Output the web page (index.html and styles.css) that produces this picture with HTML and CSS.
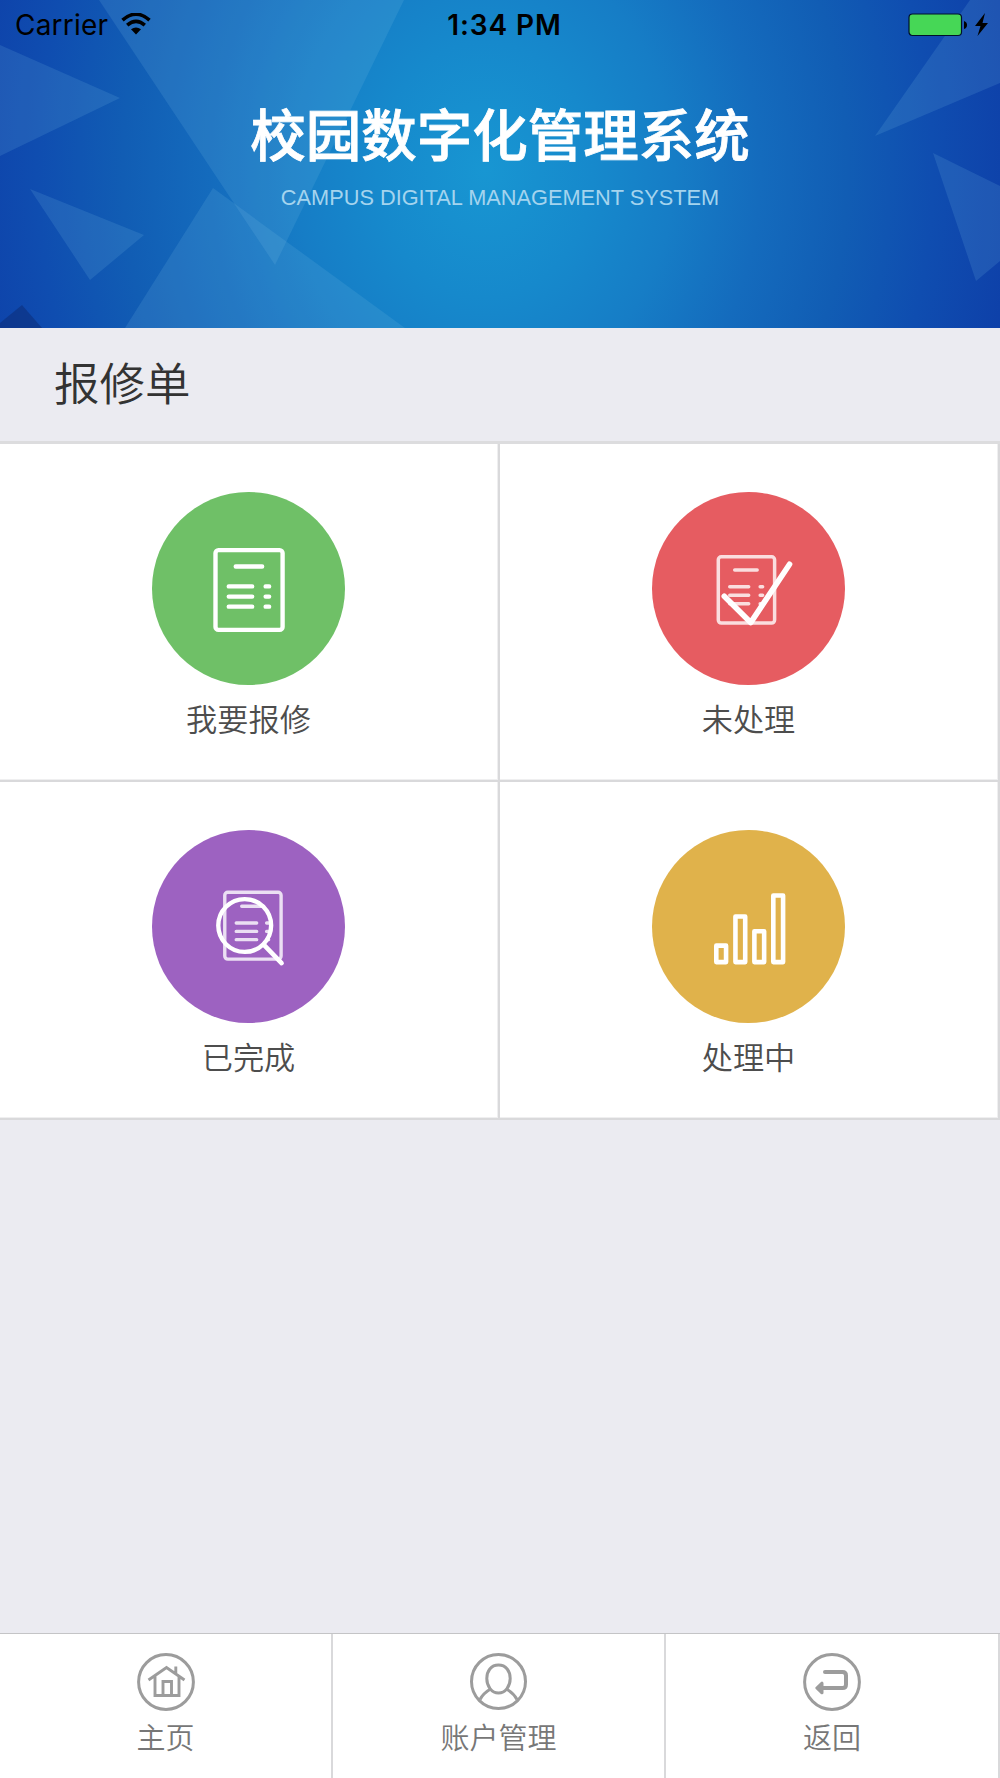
FILE: index.html
```html
<!DOCTYPE html>
<html lang="zh-CN">
<head>
<meta charset="utf-8">
<title>校园数字化管理系统</title>
<link rel="stylesheet" href="styles.css">
</head>
<body>
<div class="app">
  <header class="hero">
    <svg class="hero-bg" viewBox="0 0 1000 328" preserveAspectRatio="none" aria-hidden="true">
      <g fill="#7cc0e8" fill-opacity=".16">
        <path d="M99 0H404L275 265Z"/>
        <path d="M213 188L405 328H125Z"/>
        <path d="M0 45L120 98L0 156Z"/>
        <path d="M30 189L144 235L90 280Z"/>
        <path d="M970 0H1000V83L875 136Z"/>
        <path d="M933 153L1000 186V261L976 281Z"/>
      </g>
      <path d="M0 323L22 305L42 328H0Z" fill="#0c2a72" fill-opacity=".5"/>
    </svg>
    <div class="status">
      <div class="status-left">
        <span class="carrier">Carrier</span>
        <svg class="wifi" width="30" height="22" viewBox="0 0 30 22">
          <path d="M1.500 7.200Q15-4.800 28.500 7.200" fill="none" stroke="#000" stroke-width="3.600"/>
          <path d="M6.200 12.200Q15 4.600 23.800 12.200" fill="none" stroke="#000" stroke-width="3.600"/>
          <path d="M10 16.300Q15 12.500 20 16.300L15 21.500Z"/>
        </svg>
      </div>
      <div class="clock">1:34 PM</div>
      <div class="status-right">
        <svg width="82" height="26" viewBox="0 0 82 26">
          <rect x="1" y="2" width="52.500" height="21.500" rx="3.500" fill="#46d756" stroke="#00112c" stroke-width="1.200"/>
          <path d="M56 9Q59 10 59 13T56 17Z"/>
          <path d="M77 1L67 14H72.500L69.500 24L80 11H74.500Z"/>
        </svg>
      </div>
    </div>
    <h1 class="title">校园数字化管理系统</h1>
    <p class="subtitle">CAMPUS DIGITAL MANAGEMENT SYSTEM</p>
  </header>

  <h2 class="section">报修单</h2>

  <main class="grid">
    <a class="cell">
      <svg class="disc green" viewBox="0 0 194 194">
        <g fill="none" stroke="#fff" stroke-width="4.400" stroke-linecap="round">
          <rect x="63.700" y="58.300" width="67.300" height="80" rx="3"/>
          <path d="M84 74.700H110.500M77 94.700H100.500M77 104.900H100.500M77 115H100.500M114 94.700H117.500M114 104.900H117.500M114 115H117.500"/>
        </g>
      </svg>
      <span class="label">我要报修</span>
    </a>
    <a class="cell">
      <svg class="disc red" viewBox="0 0 194 194">
        <g fill="none" stroke="#fff" stroke-linecap="round">
          <g stroke-opacity=".8" stroke-width="3.500">
            <rect x="66.500" y="65" width="56.500" height="66.500" rx="3"/>
            <path d="M83 78.300H105.500M78 95H97M78 103.500H97M78 112H97M108.500 95H111M108.500 103.500H111M108.500 112H111"/>
          </g>
          <path d="M72.500 104.500L99 131L138 72.500" stroke-width="5.600" stroke-linejoin="round"/>
        </g>
      </svg>
      <span class="label">未处理</span>
    </a>
    <a class="cell">
      <svg class="disc purple" viewBox="0 0 194 194">
        <g fill="none" stroke="#fff" stroke-linecap="round">
          <g stroke-opacity=".8" stroke-width="3.400">
            <rect x="73" y="62.500" width="56.500" height="67" rx="3"/>
            <path d="M90 76.500H112M84.500 93.300H105M84.500 101.700H105M84.500 110H105M115 93.300H118M115 101.700H118M115 110H117"/>
          </g>
          <circle cx="93" cy="95.800" r="26.500" stroke-width="4.400"/>
          <path d="M112 115L130 133.500" stroke-width="4.600"/>
        </g>
      </svg>
      <span class="label">已完成</span>
    </a>
    <a class="cell">
      <svg class="disc yellow" viewBox="0 0 194 194">
        <g fill="none" stroke="#fff" stroke-width="4.600" stroke-linejoin="round">
          <rect x="64.500" y="116" width="9.800" height="16.500"/>
          <rect x="83.700" y="86.700" width="9.800" height="45.800"/>
          <rect x="102.700" y="101.500" width="9.800" height="31"/>
          <rect x="121.700" y="65.700" width="9.800" height="66.800"/>
        </g>
      </svg>
      <span class="label">处理中</span>
    </a>
  </main>

  <nav class="tabs">
    <a class="tab">
      <svg class="tab-icon" viewBox="0 0 58 58">
        <circle cx="29" cy="29" r="27.400"/>
        <path d="M11.500 27L29.500 14.500L47.500 27M18 23V42.500H42V23M26 42V28.500H34.500V42M38.800 20V13.500" stroke-width="2.900"/>
      </svg>
      <span>主页</span>
    </a>
    <a class="tab">
      <svg class="tab-icon" viewBox="0 0 58 58">
        <circle cx="28.500" cy="28.500" r="27"/>
        <path d="M28.500 12C21 12 16.800 18 16.800 25.500C16.800 33 21.500 40 28.500 40S40.200 33 40.200 25.500C40.200 18 36 12 28.500 12ZM20.500 36Q13 40.500 10 46.500M36.500 36Q44 40.500 47 46.500"/>
      </svg>
      <span>账户管理</span>
    </a>
    <a class="tab">
      <svg class="tab-icon" viewBox="0 0 58 58">
        <circle cx="29" cy="29" r="27.400"/>
        <path d="M22 19H39.500Q43 19 43 22.500V31.500Q43 35 39.500 35H19" stroke-width="4" stroke-linecap="round"/>
        <path d="M13.800 35L19 30.200V39.800Z" fill="#9c9c9c" stroke-linejoin="round"/>
      </svg>
      <span>返回</span>
    </a>
  </nav>
</div>
</body>
</html>
```
FILE: styles.css
```css
* { box-sizing: border-box; }

body {
  margin: 0;
  font-family: "Noto Sans CJK SC", sans-serif;
  background: #ebebf1;
}

.app {
  display: flex;
  flex-direction: column;
  height: 1778px;
}

.hero {
  position: relative;
  height: 328px;
  flex: none;
  background: radial-gradient(ellipse 540px 640px at 485px 170px, #1896d2 0%, #1689cc 20%, #167dc6 35%, #146bbd 51%, #115db4 67%, #0f4db0 83%, #0e3fa8 100%);
}

.hero-bg {
  position: absolute;
  inset: 0;
  width: 100%;
  height: 100%;
}

.status {
  position: relative;
  display: grid;
  grid-template-columns: 1fr auto 1fr;
  align-items: center;
  height: 50px;
  padding: 0 10px 0 15px;
  font-family: Inter, sans-serif;
  font-size: 28px;
  color: #000;
}

.status-left {
  display: flex;
  align-items: center;
  gap: 13px;
}

.carrier { letter-spacing: .2px; }
.wifi { margin-bottom: 3px; }

.clock {
  padding: 0 0 0 4px;
  font-size: 28px;
  font-weight: 600;
  letter-spacing: .9px;
}

.status-right {
  display: flex;
  justify-content: flex-end;
}

.title {
  position: relative;
  margin: 42px 0 0;
  font-size: 55.500px;
  font-weight: 500;
  line-height: 80px;
  text-align: center;
  color: #fff;
  -webkit-text-stroke: .8px #fff;
}

.subtitle {
  position: relative;
  margin: 11px 0 0;
  font-family: "Liberation Sans", sans-serif;
  font-size: 21.750px;
  line-height: 30px;
  text-align: center;
  color: #a4d4ee;
}

.section {
  flex: none;
  height: 113px;
  margin: 0;
  padding-left: 54px;
  font-size: 45.500px;
  font-weight: 350;
  line-height: 107px;
  color: #333;
}

.grid {
  flex: none;
  display: grid;
  grid-template-columns: 1fr 1fr;
  grid-auto-rows: 338px;
  border-top: 3px solid #dcdcde;
}

.cell {
  display: flex;
  flex-direction: column;
  align-items: center;
  padding: 48px 1px 0 0;
  background: #fff;
  border-right: 2px solid #d9d9db;
  border-bottom: 2px solid #d9d9db;
  box-shadow: inset -1px -1px 0 #efeff0;
}

.disc {
  width: 193.400px;
  height: 193.400px;
  border-radius: 50%;
}

.green { background: #6fc067; }
.red { background: #e65c61; }
.purple { background: #9d62c1; }
.yellow { background: #e0b24b; }

.label {
  margin-top: 10px;
  font-size: 31.200px;
  font-weight: 350;
  line-height: 46px;
  color: #4d4d4d;
}

.tabs {
  display: grid;
  grid-template-columns: 333px 333px 334px;
  height: 145px;
  margin-top: auto;
  border-top: 1px solid #c4c4c6;
  background: #fff;
}

.tab {
  display: flex;
  flex-direction: column;
  align-items: center;
  padding-top: 19px;
  border-right: 2px solid #d9d9db;
  font-size: 29px;
  font-weight: 350;
  line-height: 42px;
  color: #777;
}

.tab-icon {
  width: 58px;
  height: 58px;
  margin-bottom: 4px;
  fill: none;
  stroke: #9c9c9c;
  stroke-width: 3;
}
```
